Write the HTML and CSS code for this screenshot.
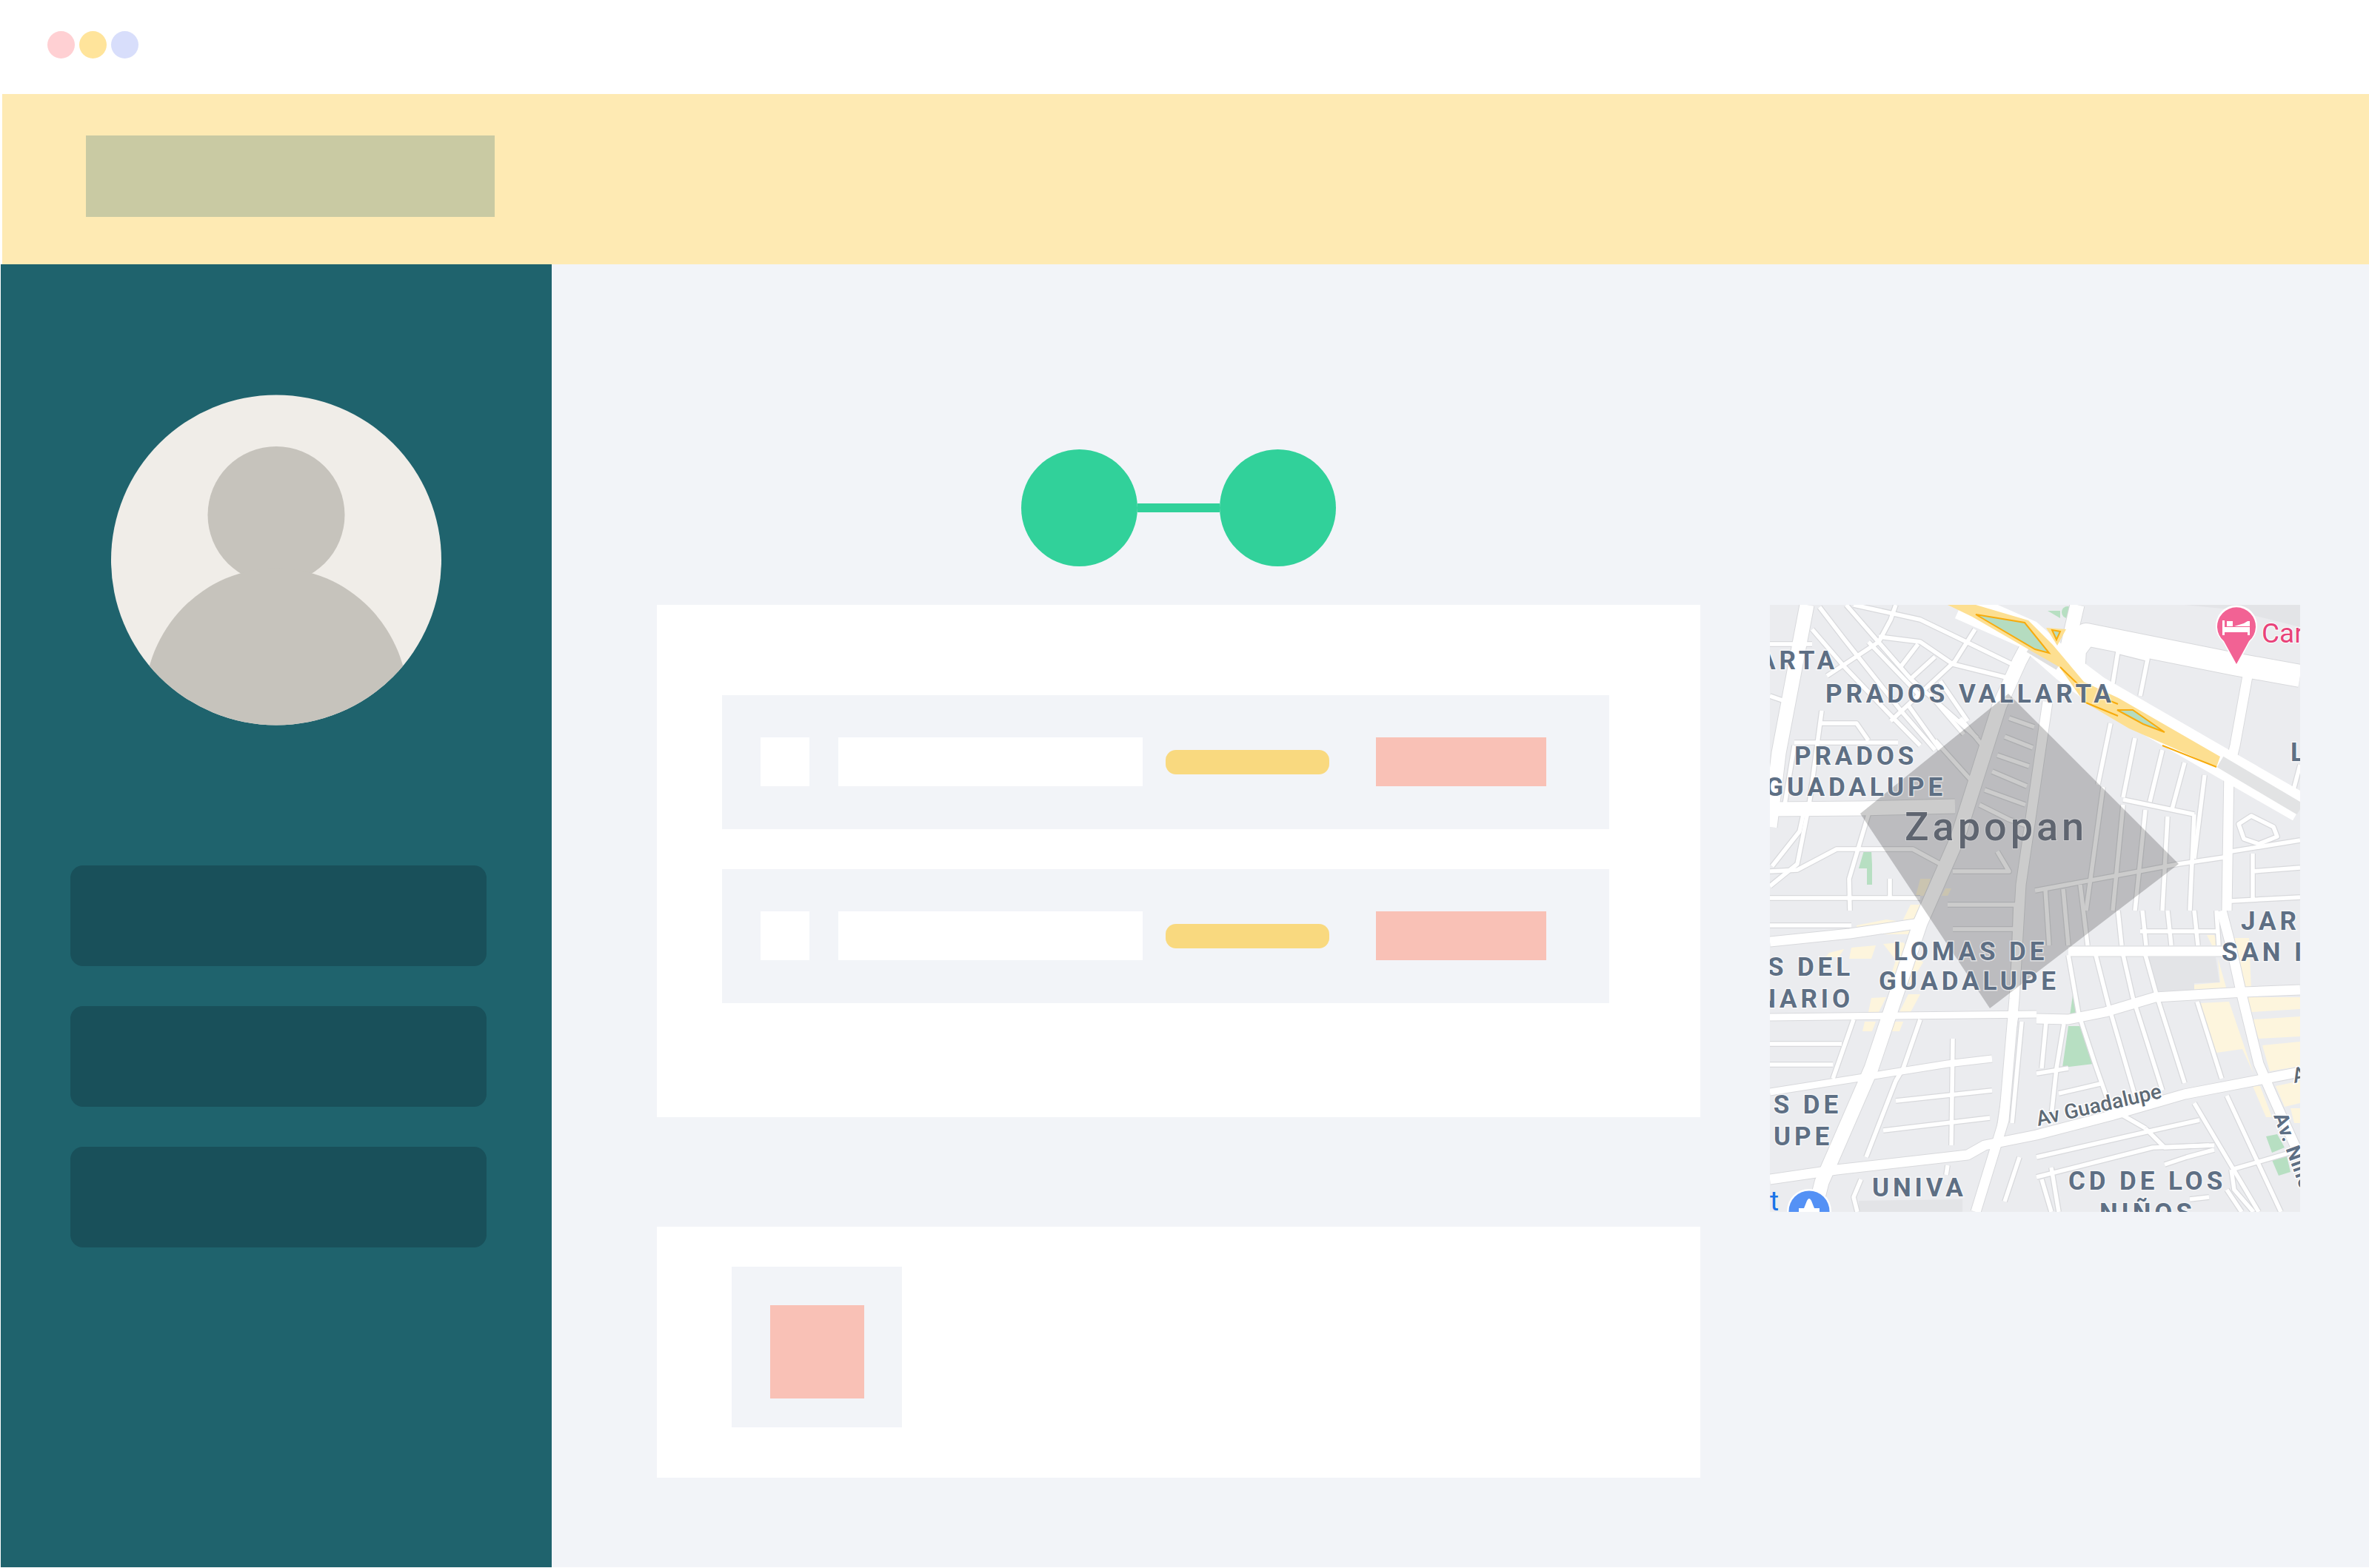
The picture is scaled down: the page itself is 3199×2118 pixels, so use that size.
FILE: index.html
```html
<!DOCTYPE html>
<html lang="en">

<head>
    <meta charset="UTF-8">
    <meta name="viewport" content="width=device-width, initial-scale=1.0">
    <title>Dashboard</title>
    <link rel="stylesheet" href="styles.css">
</head>

<body>
    <div class="titlebar">
        <span class="dot dot-red"></span>
        <span class="dot dot-yellow"></span>
        <span class="dot dot-blue"></span>
    </div>

    <div class="banner">
        <div class="banner-logo"></div>
    </div>

    <div class="main">
        <div class="sidebar">
            <svg class="avatar" viewBox="0 0 446 446">
                <circle class="avatar-bg" cx="223" cy="223" r="223" />
                <clipPath id="avatar-clip">
                    <circle cx="223" cy="223" r="223" />
                </clipPath>
                <g class="avatar-person" clip-path="url(#avatar-clip)">
                    <circle cx="223" cy="162" r="92.5" />
                    <ellipse cx="223" cy="416" rx="178" ry="182" />
                </g>
            </svg>
            <div class="nav">
                <div class="nav-item"></div>
                <div class="nav-item"></div>
                <div class="nav-item"></div>
            </div>
        </div>

        <div class="content">
            <div class="connector">
                <div class="node"></div>
                <div class="link"></div>
                <div class="node"></div>
            </div>

            <div class="columns">
                <div class="cards">
                    <div class="card card-list">
                        <div class="row">
                            <div class="row-check"></div>
                            <div class="row-text"></div>
                            <div class="row-pill"></div>
                            <div class="row-button"></div>
                        </div>
                        <div class="row">
                            <div class="row-check"></div>
                            <div class="row-text"></div>
                            <div class="row-pill"></div>
                            <div class="row-button"></div>
                        </div>
                    </div>
                    <div class="card card-thumb">
                        <div class="thumb">
                            <div class="thumb-inner"></div>
                        </div>
                    </div>
                </div>

                <svg class="map" viewBox="0 0 716 820">
                    <rect class="map-bg" width="716" height="820" />

                    <!-- shaded areas -->
                    <polygon class="area-dark" points="510,476 602,476 607,510 573,511 573,521 520,526" />
                    <polygon class="area-dark" points="120,805 260,803 260,820 120,820" />
                    <path class="area-dark" d="M560 0H716V30L620 6Z" />
                    <g class="area-cream">
                        <polygon points="580,538 620,536 653,633 638,600 603,605" />
                        <polygon points="643,530 716,530 716,546 650,550" />
                        <polygon points="652,560 716,556 716,583 660,586" />
                        <polygon points="665,595 716,590 716,623 675,630" />
                        <polygon points="683,650 716,643 716,673 695,678" />
                        <polygon points="703,680 716,680 716,700 708,700" />
                        <polygon points="652,650 662,650 678,692 670,692" />
                        <polygon points="573,513 608,510 605,478 617,520 573,521" />
                        <polygon points="627,450 647,450 650,520 638,520 633,480" />
                        <polygon points="590,446 600,446 605,460 597,460" />
                        <polygon points="117,433 157,425 177,428 197,413 203,413 190,445 117,445" />
                        <polygon points="80,470 100,465 93,476 75,476" />
                        <polygon points="110,463 143,460 137,478 107,478" />
                        <polygon points="153,458 180,456 207,483 190,510 157,520 170,480" />
                        <polygon points="137,531 157,530 147,550 133,550" />
                        <polygon points="187,526 203,526 190,550 175,550" />
                        <polygon points="128,563 143,563 138,576 125,576" />
                        <polygon points="167,563 180,563 175,576 163,576" />
                        <polygon points="203,370 217,370 210,393 197,393" />
                        <polygon points="237,383 245,383 240,393 232,393" />
                        <polygon points="190,405 205,405 195,425 180,425" />
                    </g>
                    <g class="area-park">
                        <polygon points="127,332 137,332 138,351 138,378 131,378 131,356 120,356" />
                        <polygon points="403,569 423,569 437,620 395,625" />
                        <polygon points="410,520 417,553 405,555" />
                        <polygon points="670,718 685,715 695,733 678,740" />
                        <polygon points="678,750 698,745 703,766 687,771" />
                        <circle cx="402" cy="10" r="8" />
                        <polygon points="375,8 392,8 392,18" />
                    </g>

                    <!-- street network, drawn twice for the casing -->
                    <defs>
                        <g id="minor-roads" class="road-lines">
                            <path d="M103 0L190 100L280 180" />
                            <path d="M67 3L100 46L177 143L223 196" />
                            <path d="M57 33L100 83L157 143L203 190" />
                            <path d="M77 96L147 50L163 20L170 0" />
                            <path d="M113 0L203 20L257 46L333 83" />
                            <path d="M147 43L203 50L247 80L327 100" />
                            <path d="M277 33L250 76L163 157" />
                            <path d="M177 83L200 53M190 100L223 70" />
                            <path d="M230 103L267 157M187 136L230 196M133 50L203 123" />
                            <path d="M0 53H57M0 123L20 130" />
                            <path d="M20 270L33 190" />
                            <path d="M70 143L53 270L37 350L0 380" />
                            <path d="M33 186H173M70 160H117L133 183" />
                            <path d="M0 360L37 358L90 330H193L230 350" />
                            <path d="M133 283L107 370L108 413" />
                            <path d="M162 370V396" />
                            <path d="M45 283L40 306L3 353" />
                            <path d="M0 396H203" />
                            <path d="M323 153L357 165M317 178L355 193M307 203L350 218M300 225L347 245M290 250L345 270" />
                            <path d="M257 153L287 190M223 183L277 243M215 120L262 175" />
                            <path d="M283 270L323 290L352 300" />
                            <path d="M247 360H323L307 333" />
                            <path d="M240 405H332L330 460M247 438H330" />
                            <path d="M358 386L552 350L620 340" />
                            <path d="M372 384L377 460M396 384L403 460M419 378L429 460" />
                            <path d="M460 160L443 243M493 180L477 260M530 196L513 266M560 213L543 276" />
                            <path d="M587 230L573 343M477 263L573 283" />
                            <path d="M450 246L427 413M477 270L463 413M507 277L493 413M537 286L530 413M573 283L567 413" />
                            <path d="M500 441H603" />
                            <path d="M470 63L510 73L500 123M470 63L463 106" />
                            <path d="M633 296L650 285L680 300L685 313L660 323L640 316Z" />
                            <path d="M623 333L716 318M652 336V396M652 360L716 355M623 400L716 395" />
                            <path d="M716 216L707 250" />
                            <path d="M0 433H110M0 593H97M0 621H85" />
                            <path d="M113 560L85 640M203 560L180 626L170 643L130 746" />
                            <path d="M333 553L323 616L310 703M340 563L327 700" />
                            <path d="M247 586L245 730" />
                            <path d="M170 670L300 656M153 710L297 693" />
                            <path d="M403 473L417 553L440 623L460 680L507 707" />
                            <path d="M440 473L457 540L493 663" />
                            <path d="M477 473L490 530L530 656" />
                            <path d="M507 473L523 530L560 646" />
                            <path d="M577 536L610 640" />
                            <path d="M470 413L475 460M503 413L508 460M537 413L542 460M573 413L578 460M603 413L606 460" />
                            <path d="M573 673L660 820M617 663L690 820" />
                            <path d="M360 746L517 710L580 696M360 773L517 733L600 730M623 763L716 736" />
                            <path d="M403 626L360 633M390 660L450 646" />
                            <path d="M380 690L387 626L397 566M367 626L373 563" />
                            <path d="M507 707L533 733L593 730M533 756L563 746L600 736" />
                            <path d="M567 803L593 800M617 790L637 820M623 763L627 790L653 820" />
                            <path d="M380 760L390 820M367 776L380 820" />
                            <path d="M123 776L113 800L118 820M240 757L238 770M337 746L317 806" />
                        </g>
                        <g id="thin-roads" class="road-lines">
                            <path d="M0 557L360 553" />
                            <path d="M0 658L140 636L240 620L300 613" />
                        </g>
                        <g id="medium-roads" class="road-lines">
                            <path d="M360 559L403 560L453 550L520 530L640 523L716 520" />
                            <path d="M0 455L108 444L203 430" />
                            <path d="M403 468H623" />
                            <path d="M375 131L339 378L330 532L316 696L278 820" />
                            <path d="M617 413L620 223L628 190L645 96" />
                            <path d="M610 413L623 463L637 526L660 620L680 666L716 746" />
                            <path d="M0 776L90 763L267 743L290 730L360 716L460 690L560 661L716 631" />
                        </g>
                        <g id="major-roads" class="road-lines">
                            <path d="M50 0L12 200L0 300" />
                            <path d="M0 276L123 275L250 272" />
                            <path d="M60 820L70 780L137 626L203 430L253 316L310 136L337 76L352 48" />
                            <path d="M400 65L415 0" />
                        </g>
                        <g id="wide-roads" class="road-lines">
                            <path d="M410 95L412 60L427 40L627 80L716 96" />
                        </g>
                    </defs>
                    <use href="#minor-roads" class="road-edge road-s" />
                    <use href="#thin-roads" class="road-edge road-t" />
                    <use href="#medium-roads" class="road-edge road-m" />
                    <use href="#major-roads" class="road-edge road-l" />
                    <use href="#wide-roads" class="road-edge road-w" />
                    <use href="#minor-roads" class="road-fill road-s" />
                    <use href="#thin-roads" class="road-fill road-t" />
                    <use href="#medium-roads" class="road-fill road-m" />
                    <use href="#major-roads" class="road-fill road-l" />
                    <use href="#wide-roads" class="road-fill road-w" />

                    <!-- highway -->
                    <path class="highway-white" d="M258 0L349 40L400 85L440 115L608 212L716 274" />
                    <path class="highway-grey" d="M608 212L716 276" />
                    <path class="highway-grey-stub" d="M349 60L389 84" />
                    <polygon class="highway-yellow"
                        points="240,0 278,0 349,21 382,54 424,104 471,126 608,205 603,219 485,167 424,131 391,84 349,60 273,16" />
                    <polygon class="highway-yellow" points="373,31 400,33 388,55" />
                    <polygon class="highway-island" points="278,13 344,24 377,65 358,60" />
                    <polygon class="highway-island" points="469,142 490,142 533,172 504,161" />
                    <polygon class="highway-island" points="381,34 392,36 387,47" />
                    <path class="highway-line" d="M424 131L470 150M530 190L603 219M392 84L424 115M455 128L470 134" />

                    <!-- district shape -->
                    <polygon class="district" points="322,120 552,350 297,545 122,282" />

                    <!-- labels -->
                    <text class="label label-end" x="92" y="87">ARTA</text>
                    <text class="label" x="75" y="132">PRADOS VALLARTA</text>
                    <text class="label" x="33" y="216">PRADOS</text>
                    <text class="label label-end" x="238" y="258">GUADALUPE</text>
                    <text class="label-city" x="182" y="318">Zapopan</text>
                    <text class="label" x="167" y="480">LOMAS DE</text>
                    <text class="label" x="147" y="520">GUADALUPE</text>
                    <text class="label label-end" x="113" y="501">S DEL</text>
                    <text class="label label-end" x="113" y="544">NARIO</text>
                    <text class="label label-end" x="97" y="687">S DE</text>
                    <text class="label label-end" x="85" y="730">UPE</text>
                    <text class="label" x="138" y="799">UNIVA</text>
                    <text class="label" x="403" y="790">CD DE LOS</text>
                    <text class="label" x="445" y="833">NIÑOS</text>
                    <text class="label" x="636" y="439">JAR</text>
                    <text class="label" x="610" y="481">SAN I</text>
                    <text class="label" x="703" y="211">L</text>
                    <text class="label-road" transform="translate(362 704) rotate(-12.8)">Av Guadalupe</text>
                    <text class="label-road" transform="translate(708 646) rotate(-12.8)">Av</text>
                    <text class="label-avenue" transform="translate(680 690) rotate(70)">Av. Niños</text>

                    <!-- hotel pin -->
                    <path class="pin-halo" d="M630 84L612 50A28 28 0 1 1 648 50Z" />
                    <path class="pin" d="M630 80L613 49A26 26 0 1 1 647 49Z" />
                    <path class="pin-bed" d="M611 21H614V30H648V41H645V37H614V41H611ZM617 22H625V29H617ZM627 29L640 25L645 22H648V29Z" />
                    <text class="label-pin" x="664" y="51">Car</text>

                    <!-- store marker cut by the map edge -->
                    <text class="label-store" x="0" y="818">t</text>
                    <circle class="store-halo" cx="53" cy="819" r="30" />
                    <circle class="store" cx="53" cy="819" r="27.5" />
                    <path class="store-bag" d="M39 820V815H46L50 805Q53 799 56 805L60 815H67V820Z" />
                </svg>
            </div>
        </div>
    </div>
</body>

</html>
```

FILE: styles.css
```css
* {
    margin: 0;
    padding: 0;
    box-sizing: border-box;
}

body {
    background-color: #ffffff;
    width: 3199px;
    height: 2118px;
    overflow: hidden;
    font-family: Roboto, Arial, sans-serif;
}

.titlebar {
    display: flex;
    gap: 6px;
    height: 127px;
    padding: 42px 0 0 64px;
}

.dot {
    width: 37px;
    height: 37px;
    border-radius: 50%;
}

.dot-red {
    background-color: #ffd0d3;
}

.dot-yellow {
    background-color: #ffe49b;
}

.dot-blue {
    background-color: #d8defb;
}

.banner {
    height: 230px;
    margin-left: 3px;
    padding: 56px 0 0 113px;
    background-color: #feeab3;
}

.banner-logo {
    width: 552px;
    height: 110px;
    background-color: #c9caa3;
}

.main {
    display: flex;
    height: 1760px;
    margin-left: 1px;
}

.sidebar {
    display: flex;
    flex-direction: column;
    width: 744px;
    padding: 176px 0 0 94px;
    background-color: #1f636d;
}

.avatar {
    display: block;
    width: 446px;
    height: 447px;
    margin-left: 55px;
}

.avatar-bg {
    fill: #f0ede8;
}

.avatar-person {
    fill: #c6c3bc;
}

.nav {
    display: flex;
    flex-direction: column;
    gap: 54px;
    margin-top: 189px;
}

.nav-item {
    width: 562px;
    height: 136px;
    border-radius: 17px;
    background-color: #19505a;
}

.content {
    flex: 1;
    padding: 250px 0 0 142px;
    background-color: #f2f4f8;
}

.connector {
    display: flex;
    align-items: center;
    justify-content: center;
    width: 1409px;
    height: 158px;
}

.node {
    width: 157px;
    height: 158px;
    border-radius: 50%;
    background-color: #31d19a;
}

.link {
    width: 111px;
    height: 12px;
    background-color: #31d19a;
}

.columns {
    display: flex;
    align-items: flex-start;
    gap: 94px;
    margin-top: 52px;
}

.cards {
    display: flex;
    flex-direction: column;
    gap: 148px;
    width: 1409px;
}

.card {
    background-color: #ffffff;
}

.card-list {
    display: flex;
    flex-direction: column;
    gap: 54px;
    height: 692px;
    padding: 122px 123px 0 88px;
}

.row {
    display: flex;
    align-items: flex-start;
    height: 181px;
    padding: 57px 0 0 52px;
    background-color: #f2f4f8;
}

.row-check {
    width: 66px;
    height: 66px;
    background-color: #ffffff;
}

.row-text {
    width: 411px;
    height: 66px;
    margin-left: 39px;
    background-color: #ffffff;
}

.row-pill {
    width: 221px;
    height: 33px;
    margin: 17px 0 0 31px;
    border-radius: 14px;
    background-color: #f9d97f;
}

.row-button {
    width: 230px;
    height: 66px;
    margin-left: 63px;
    background-color: #f9c1b6;
}

.card-thumb {
    height: 339px;
    padding: 54px 0 0 101px;
}

.thumb {
    display: flex;
    justify-content: center;
    width: 230px;
    height: 217px;
    padding-top: 52px;
    background-color: #f2f4f8;
}

.thumb-inner {
    width: 127px;
    height: 126px;
    background-color: #f9c1b6;
}

/* map */
.map {
    display: block;
    flex-shrink: 0;
    width: 716px;
    height: 820px;
}

.map-bg {
    fill: #ebecef;
}

.area-dark {
    fill: #e3e4e7;
}

.area-cream {
    fill: #fdf5dd;
}

.area-park {
    fill: #b7dfc2;
}

.road-lines {
    fill: none;
    stroke-linejoin: round;
}

.road-edge {
    stroke: #d8d9dc;
}

.road-fill {
    stroke: #ffffff;
}

.road-edge.road-s {
    stroke-width: 8px;
}

.road-fill.road-s {
    stroke-width: 5.5px;
}

.road-edge.road-t {
    stroke-width: 11px;
}

.road-fill.road-t {
    stroke-width: 9px;
}

.road-edge.road-m {
    stroke-width: 15px;
}

.road-fill.road-m {
    stroke-width: 13px;
}

.road-edge.road-l {
    stroke-width: 21px;
}

.road-fill.road-l {
    stroke-width: 19px;
}

.road-edge.road-w {
    stroke-width: 32px;
}

.road-fill.road-w {
    stroke-width: 30px;
}

.highway-white {
    fill: none;
    stroke: #ffffff;
    stroke-width: 40px;
}

.highway-grey {
    fill: none;
    stroke: #e2e3e4;
    stroke-width: 17px;
}

.highway-grey-stub {
    fill: none;
    stroke: #dfdfdf;
    stroke-width: 9px;
}

.highway-yellow {
    fill: #fddf91;
}

.highway-island {
    fill: #b5dcc0;
    stroke: #f7ab0c;
    stroke-width: 2px;
}

.highway-line {
    fill: none;
    stroke: #f7ab0c;
    stroke-width: 2px;
}

.district {
    fill: rgba(0, 0, 0, 0.2);
}

.label {
    font-family: Roboto, sans-serif;
    font-size: 35px;
    font-weight: 700;
    letter-spacing: 4.9px;
    fill: #5e6f84;
    stroke: rgba(255, 255, 255, 0.55);
    stroke-width: 3px;
    paint-order: stroke;
}

.label-end {
    text-anchor: end;
}

.label-city {
    font-family: Roboto, sans-serif;
    font-size: 54px;
    font-weight: 500;
    letter-spacing: 5px;
    fill: #5f6570;
    stroke: rgba(255, 255, 255, 0.25);
    stroke-width: 2px;
    paint-order: stroke;
}

.label-road {
    font-family: Roboto, sans-serif;
    font-size: 28px;
    font-weight: 500;
    fill: #5e6a75;
    stroke: #ffffff;
    stroke-width: 3px;
    paint-order: stroke;
}

.label-avenue {
    font-family: Roboto, sans-serif;
    font-size: 27px;
    font-weight: 700;
    letter-spacing: 1px;
    fill: #5e6f84;
    stroke: #ffffff;
    stroke-width: 3px;
    paint-order: stroke;
}

.label-pin {
    font-family: Roboto, sans-serif;
    font-size: 37px;
    fill: #e8437a;
    stroke: #ffffff;
    stroke-width: 2px;
    paint-order: stroke;
}

.label-store {
    font-family: Roboto, sans-serif;
    font-size: 37px;
    fill: #1a73e8;
}

.pin {
    fill: #f26294;
}

.pin-halo,
.store-halo {
    fill: #ffffff;
}

.pin-bed,
.store-bag {
    fill: #ffffff;
}

.store {
    fill: #5491f5;
}
```
